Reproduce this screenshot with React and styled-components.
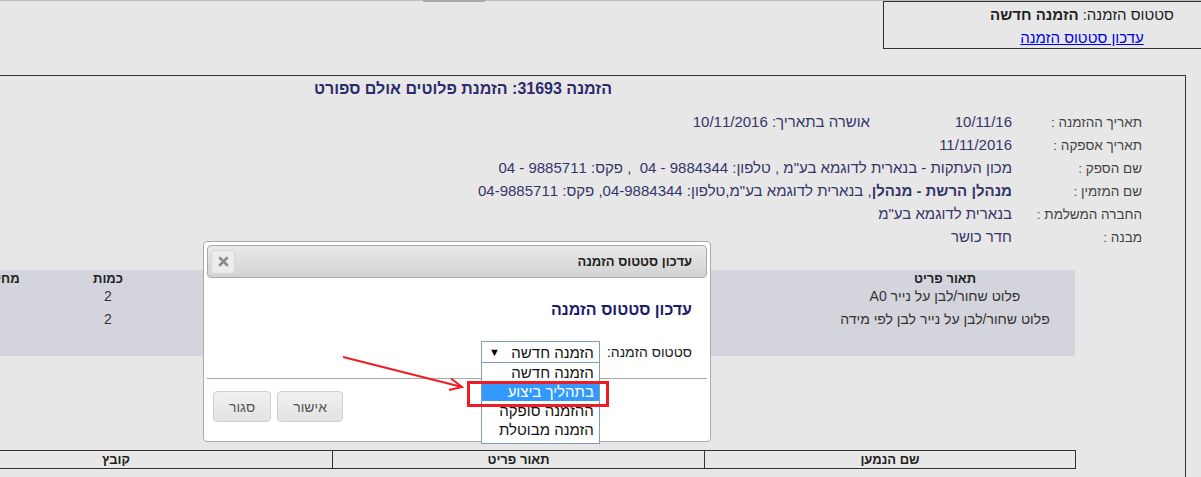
import React from "react";
import styled, { createGlobalStyle } from "styled-components";

const GlobalStyle = createGlobalStyle`
  html, body { margin: 0; padding: 0; overflow: hidden; background: #e7e7e7; }
  body { font-family: "Liberation Sans", "DejaVu Sans", Arial, sans-serif; }
`;

const Page = styled.div`
  position: relative;
  width: 1201px;
  height: 477px;
  overflow: hidden;
  direction: rtl;
  background: #e7e7e7;
  color: #333;
  font-size: 15px;
`;

const TopRule = styled.div`
  height: 1px;
  background: #bdbdbd;
  display: flex;
  padding-right: 716px;
`;

const TopTab = styled.div`
  flex: none;
  width: 62px;
  height: 2px;
  background: #aaaaaa;
`;

const StatusBar = styled.div`
  display: flex;
  justify-content: flex-start;
  margin-right: -22px;
`;

const StatusBox = styled.div`
  width: 340px;
  height: 48px;
  box-sizing: border-box;
  border: 1px solid #333;
  padding: 4px 0 0 58px;
  text-align: center;
  color: #222;
  line-height: 18px;
`;

const StatusLine = styled.div`
  margin-bottom: 5px;
`;

const StatusLink = styled.a`
  color: #0000ee;
  text-decoration: underline;
  cursor: pointer;
`;

const Main = styled.section`
  margin-top: 26px;
  margin-right: 15px;
  width: 1286px;
  height: 420px;
  box-sizing: border-box;
  border-top: 1px solid #333;
  border-right: 1px solid #333;
  padding-top: 4px;
`;

const OrderTitle = styled.h2`
  margin: 0 573px 0 0;
  font-size: 16px;
  line-height: 18px;
  font-weight: bold;
  color: #2c2c6a;
  white-space: nowrap;
`;

const Details = styled.div`
  margin: 12px 43px 0 0;
  display: flex;
  flex-direction: column;
`;

const DetailRow = styled.div`
  display: flex;
  align-items: baseline;
  height: 23px;
  line-height: 23px;
  white-space: nowrap;
`;

const Label = styled.div`
  flex: none;
  width: 130px;
  font-size: 13.5px;
  color: #444;
`;

const Value = styled.div`
  flex: none;
  width: ${(p) => (p.$w ? `${p.$w}px` : "auto")};
  color: #35356a;
`;

const Strong = styled.b`
  font-weight: bold;
`;

const ItemsTable = styled.div`
  margin: 22px 110px 0 0;
  background: #d4d4dc;
  padding-bottom: 23px;
`;

const ItemsRow = styled.div`
  display: grid;
  grid-template-columns: 260px 1fr 70px 173px;
  height: ${(p) => (p.$head ? "17px" : "23px")};
  line-height: ${(p) => (p.$head ? "17px" : "18px")};
`;

const ItemsHead = styled.div`
  text-align: center;
  font-weight: bold;
  font-size: 13px;
  color: #222;
  white-space: nowrap;
`;

const ItemsCell = styled.div`
  text-align: center;
  font-size: 14px;
  color: #333;
  white-space: nowrap;
`;

const FilesTable = styled.div`
  margin: 94px 109px 0 0;
  border-top: 1px solid #333;
  border-bottom: 1px solid #333;
  border-right: 1px solid #333;
  display: grid;
  grid-template-columns: 371px 372px 1fr;
`;

const FilesHead = styled.div`
  height: 17px;
  line-height: 17px;
  text-align: center;
  font-weight: bold;
  font-size: 13px;
  color: #222;
  border-left: ${(p) => (p.$last ? "none" : "1px solid #333")};
`;

/* ---------- dialog overlay ---------- */

const Dialog = styled.div`
  position: absolute;
  left: 203px;
  top: 241px;
  width: 508px;
  height: 201px;
  box-sizing: border-box;
  background: #fff;
  border: 1px solid #aaa;
  border-radius: 4px;
  padding: 3px;
  display: flex;
  flex-direction: column;
`;

const TitleBar = styled.div`
  height: 33px;
  box-sizing: border-box;
  border: 1px solid #aaa;
  border-radius: 4px;
  background: linear-gradient(#e9e9e9, #d2d2d2);
  display: flex;
  align-items: center;
  justify-content: space-between;
  padding: 0 14px 0 3px;
  font-weight: bold;
  font-size: 13px;
  color: #222;
`;

const CloseButton = styled.div`
  width: 24px;
  height: 24px;
  box-sizing: border-box;
  border: 1px solid #d6d6d6;
  border-radius: 3px;
  background: #ececec;
  display: flex;
  align-items: center;
  justify-content: center;
`;

const DialogBody = styled.div`
  padding: 0 15px;
`;

const DialogHeading = styled.h3`
  margin: 22px 0 0 0;
  font-size: 16px;
  line-height: 20px;
  font-weight: bold;
  color: #1c1c6c;
`;

const FormRow = styled.div`
  margin-top: 21px;
  display: flex;
  align-items: center;
  gap: 7px;
  font-size: 14px;
  color: #222;
`;

const SelectWrap = styled.div`
  position: relative;
  width: 119px;
`;

const SelectBox = styled.div`
  height: 22px;
  box-sizing: border-box;
  border: 1px solid #7f9db9;
  background: #fff;
  display: flex;
  align-items: center;
  justify-content: space-between;
  padding: 0 5px 0 7px;
  font-size: 15px;
  color: #111;
`;

const Caret = styled.span`
  font-size: 11px;
  color: #000;
`;

const OptionList = styled.div`
  position: absolute;
  top: 21px;
  right: 0;
  width: 119px;
  box-sizing: border-box;
  border: 1px solid #7f9db9;
  background: #fff;
  padding-bottom: 4px;
  z-index: 2;
`;

const Option = styled.div`
  height: 19px;
  line-height: 19px;
  padding-right: 5px;
  font-size: 15px;
  color: ${(p) => (p.$active ? "#fff" : "#111")};
  background: ${(p) => (p.$active ? "#3399ff" : "transparent")};
  white-space: nowrap;
`;

const ButtonPane = styled.div`
  margin-top: 15px;
  border-top: 1px solid #aaa;
  padding: 12px 0 0 6px;
  display: flex;
  justify-content: flex-end;
  gap: 6px;
`;

const Button = styled.button`
  height: 31px;
  padding: 0 15px;
  border: 1px solid #d0d0d0;
  border-radius: 4px;
  background: linear-gradient(#f0f0f0, #e3e3e3);
  color: #555;
  font-family: inherit;
  font-size: 14px;
`;

const Annotation = styled.svg`
  position: absolute;
  left: 0;
  top: 0;
  pointer-events: none;
  z-index: 5;
`;

export default function App() {
  return (
    <>
      <GlobalStyle />
      <Page>
        <TopRule>
          <TopTab />
        </TopRule>
        <StatusBar>
          <StatusBox>
            <StatusLine>
              סטטוס הזמנה: <Strong>הזמנה חדשה</Strong>
            </StatusLine>
            <StatusLink>עדכון סטטוס הזמנה</StatusLink>
          </StatusBox>
        </StatusBar>

        <Main>
          <OrderTitle>הזמנה 31693: הזמנת פלוטים אולם ספורט</OrderTitle>
          <Details>
            <DetailRow>
              <Label>תאריך ההזמנה :</Label>
              <Value $w={142}>10/11/16</Value>
              <Value>אושרה בתאריך: 10/11/2016</Value>
            </DetailRow>
            <DetailRow>
              <Label>תאריך אספקה :</Label>
              <Value>11/11/2016</Value>
            </DetailRow>
            <DetailRow>
              <Label>שם הספק :</Label>
              <Value>
                מכון העתקות - בנארית לדוגמא בע"מ , טלפון: 9884344 - 04&nbsp; , פקס: 9885711 - 04
              </Value>
            </DetailRow>
            <DetailRow>
              <Label>שם המזמין :</Label>
              <Value>
                <Strong>מנהלן הרשת - מנהלן</Strong>, בנארית לדוגמא בע"מ,טלפון: 04-9884344, פקס: 04-9885711
              </Value>
            </DetailRow>
            <DetailRow>
              <Label>החברה המשלמת :</Label>
              <Value>בנארית לדוגמא בע"מ</Value>
            </DetailRow>
            <DetailRow>
              <Label>מבנה :</Label>
              <Value>חדר כושר</Value>
            </DetailRow>
          </Details>

          <ItemsTable>
            <ItemsRow $head>
              <ItemsHead>תאור פריט</ItemsHead>
              <ItemsHead />
              <ItemsHead>כמות</ItemsHead>
              <ItemsHead>מחיר יחידה</ItemsHead>
            </ItemsRow>
            <ItemsRow>
              <ItemsCell>פלוט שחור/לבן על נייר A0</ItemsCell>
              <ItemsCell />
              <ItemsCell>2</ItemsCell>
              <ItemsCell />
            </ItemsRow>
            <ItemsRow>
              <ItemsCell>פלוט שחור/לבן על נייר לבן לפי מידה</ItemsCell>
              <ItemsCell />
              <ItemsCell>2</ItemsCell>
              <ItemsCell />
            </ItemsRow>
          </ItemsTable>

          <FilesTable>
            <FilesHead>שם הנמען</FilesHead>
            <FilesHead>תאור פריט</FilesHead>
            <FilesHead $last>קובץ</FilesHead>
          </FilesTable>
        </Main>

        <Dialog>
          <TitleBar>
            <span>עדכון סטטוס הזמנה</span>
            <CloseButton>
              <svg width="11" height="11" viewBox="0 0 11 11">
                <path d="M2 2 L9 9 M9 2 L2 9" stroke="#8a8a8a" strokeWidth="2.6" strokeLinecap="round" />
              </svg>
            </CloseButton>
          </TitleBar>
          <DialogBody>
            <DialogHeading>עדכון סטטוס הזמנה</DialogHeading>
            <FormRow>
              <span>סטטוס הזמנה:</span>
              <SelectWrap>
                <SelectBox>
                  <span>הזמנה חדשה</span>
                  <Caret>▼</Caret>
                </SelectBox>
                <OptionList>
                  <Option>הזמנה חדשה</Option>
                  <Option $active>בתהליך ביצוע</Option>
                  <Option>ההזמנה סופקה</Option>
                  <Option>הזמנה מבוטלת</Option>
                </OptionList>
              </SelectWrap>
            </FormRow>
          </DialogBody>
          <ButtonPane>
            <Button>אישור</Button>
            <Button>סגור</Button>
          </ButtonPane>
        </Dialog>

        <Annotation width="1201" height="477" viewBox="0 0 1201 477">
          <rect x="468.5" y="382.5" width="139" height="23" fill="none" stroke="#ee1c24" strokeWidth="3" />
          <path d="M343 357 L462 387" stroke="#ee1c24" strokeWidth="2" fill="none" />
          <path d="M451 378.5 L462 387 L449 390" stroke="#ee1c24" strokeWidth="2" fill="none" strokeLinejoin="miter" />
        </Annotation>
      </Page>
    </>
  );
}
